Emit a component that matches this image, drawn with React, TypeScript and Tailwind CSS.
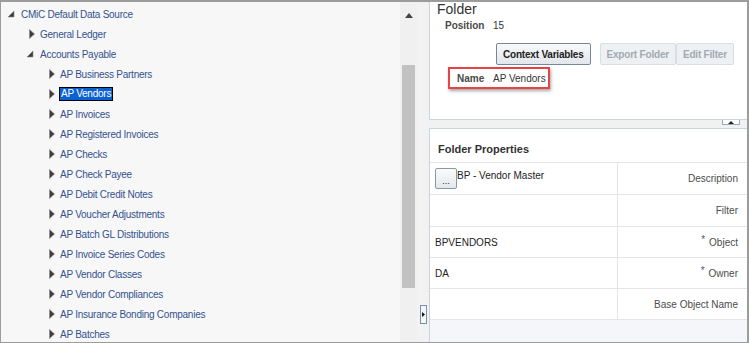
import React from "react";

type Node = { label: string; level: number; expanded?: boolean; selected?: boolean };

const nodes: Node[] = [
  { label: "CMiC Default Data Source", level: 0, expanded: true },
  { label: "General Ledger", level: 1 },
  { label: "Accounts Payable", level: 1, expanded: true },
  { label: "AP Business Partners", level: 2 },
  { label: "AP Vendors", level: 2, selected: true },
  { label: "AP Invoices", level: 2 },
  { label: "AP Registered Invoices", level: 2 },
  { label: "AP Checks", level: 2 },
  { label: "AP Check Payee", level: 2 },
  { label: "AP Debit Credit Notes", level: 2 },
  { label: "AP Voucher Adjustments", level: 2 },
  { label: "AP Batch GL Distributions", level: 2 },
  { label: "AP Invoice Series Codes", level: 2 },
  { label: "AP Vendor Classes", level: 2 },
  { label: "AP Vendor Compliances", level: 2 },
  { label: "AP Insurance Bonding Companies", level: 2 },
  { label: "AP Batches", level: 2 },
];

const indent = ["pl-[6px]", "pl-[25px]", "pl-[45px]"];

function Collapsed() {
  return (
    <svg width="6" height="10" viewBox="0 0 6 10" className="ml-[3px]">
      <polygon points="0.5,0.5 5.5,5 0.5,9.5" fill="#3c3c3c" stroke="#8a8a8a" strokeWidth="0.8" />
    </svg>
  );
}

function Expanded() {
  return (
    <svg width="8" height="8" viewBox="0 0 8 8">
      <polygon points="7,1 7,7 1,7" fill="#3c3c3c" stroke="#8a8a8a" strokeWidth="0.6" />
    </svg>
  );
}

function TreeRow({ node }: { node: Node }) {
  return (
    <div className={`h-[20px] flex items-center ${indent[node.level]}`}>
      <div className="w-[14px] flex items-center">
        {node.expanded ? <Expanded /> : <Collapsed />}
      </div>
      {node.selected ? (
        <span className="-ml-[1px] px-[1px] h-[14px] leading-[12px] border border-black bg-[#0b61d2] text-white">
          {node.label}
        </span>
      ) : (
        <span className="text-[#34528f]">{node.label}</span>
      )}
    </div>
  );
}

const props = [
  { value: "BP - Vendor Master", label: "Description", lookup: true, h: "h-[32px]" },
  { value: "", label: "Filter", h: "h-[32px]" },
  { value: "BPVENDORS", label: "Object", required: true, h: "h-[31px]" },
  { value: "DA", label: "Owner", required: true, h: "h-[31px]" },
  { value: "", label: "Base Object Name", h: "h-[31px]" },
];

export default function App() {
  return (
    <div className="w-[749px] h-[343px] flex overflow-hidden border-t-2 border-l border-r-2 border-b border-[#9c9c9c] bg-[#f7f7f7] font-['Liberation_Sans',Arial,sans-serif] text-[10px]">
      {/* Tree */}
      <div className="w-[399px] shrink-0 pt-[2px] tracking-[-0.25px]">
        {nodes.map((n) => (
          <TreeRow key={n.label} node={n} />
        ))}
      </div>

      {/* Scrollbar */}
      <div className="w-[17px] shrink-0 bg-[#f0f0f0] flex flex-col items-center pt-[1px]">
        <div className="h-[62px] flex items-start pt-[10px]">
          <svg width="8" height="5" viewBox="0 0 8 5">
            <polygon points="4,0 8,5 0,5" fill="#444" />
          </svg>
        </div>
        <div className="w-[13px] h-[223px] bg-[#c1c1c1]" />
      </div>

      {/* Splitter */}
      <div className="w-[12px] shrink-0 bg-[#f2f2f2] flex flex-col justify-end items-center pb-[18px]">
        <div className="w-[7px] h-[19px] border border-[#7990a8] bg-[#f4f7fa] flex items-center justify-center">
          <svg width="3" height="5" viewBox="0 0 3 5">
            <polygon points="0,0 3,2.5 0,5" fill="#111" />
          </svg>
        </div>
      </div>

      {/* Right */}
      <div className="flex-1 flex flex-col">
        <div className="h-[118px] bg-white border-l border-b border-[#c9d3dc] pl-[7px]">
          <div className="text-[14px] leading-[15px] text-[#333]">Folder</div>
          <div className="flex items-center h-[14px] mt-[1px] pl-[8px] text-[#333]">
            <span className="w-[48px] font-bold text-[#4a4a4a]">Position</span>
            <span>15</span>
          </div>
          <div className="flex mt-[11px] ml-[59px] h-[22px] tracking-[-0.2px]">
            <button className="h-[22px] px-[6px] border border-[#74879b] rounded-[2px] bg-gradient-to-b from-[#f8f9fb] to-[#e2e7ec] font-bold text-[#222]">
              Context Variables
            </button>
            <button className="ml-[9px] h-[22px] px-[6px] border border-[#d8dee4] rounded-[2px] bg-[#eef1f4] font-bold text-[#a3a9b0]">
              Export Folder
            </button>
            <button className="h-[22px] px-[6px] border border-[#d8dee4] rounded-[2px] bg-[#eef1f4] font-bold text-[#a3a9b0]">
              Edit Filter
            </button>
          </div>
          <div className="ml-[11px] mt-[2px] w-[102px] h-[22px] border-2 border-[#ea4244] shadow-[1px_2px_3px_rgba(0,0,0,0.35)] flex items-center pl-[7px]">
            <span className="w-[36px] font-bold text-[#4a4a4a]">Name</span>
            <span className="text-[#333]">AP Vendors</span>
          </div>
        </div>

        <div className="h-[8px] bg-[#f1f1f1] flex justify-end pr-[7px]">
          <div className="w-[18px] h-[5px] border border-t-0 border-[#9aabbd] bg-white flex justify-center items-end">
            <svg width="6" height="3" viewBox="0 0 6 3">
              <polygon points="3,0 6,3 0,3" fill="#222" />
            </svg>
          </div>
        </div>

        <div className="flex-1 bg-white border-l border-t border-[#c9d3dc] flex flex-col">
          <div className="h-[33px] flex items-end pb-[5px] pl-[8px] text-[11px] font-bold text-[#333]">
            Folder Properties
          </div>
          <div className="border-t border-[#e2e6eb]">
            {props.map((p) => (
              <div key={p.label} className={`flex border-b border-[#e2e6eb] ${p.h}`}>
                <div className="w-[188px] border-r border-[#e2e6eb] pl-[5px] text-[#222]">
                  {p.lookup ? (
                    <div className="flex items-start pt-[5px]">
                      <button className="w-[22px] h-[21px] border border-[#8a98a6] rounded-[2px] bg-gradient-to-b from-[#fafbfc] to-[#e3e7eb] text-[9px] leading-[14px] pt-[4px] text-[#222]">
                        ...
                      </button>
                      <span className="leading-[13px] mt-[1px]">{p.value}</span>
                    </div>
                  ) : (
                    <div className="h-full flex items-center">{p.value}</div>
                  )}
                </div>
                <div className="flex-1 flex items-center justify-end pr-[9px] text-[#4c4c4c]">
                  {p.required && <span className="text-[#4b5b78] mr-[4px] -mt-[6px]">*</span>}
                  {p.label}
                </div>
              </div>
            ))}
          </div>
          <div className="flex-1 bg-[#f4f6fa]" />
        </div>
      </div>
    </div>
  );
}
